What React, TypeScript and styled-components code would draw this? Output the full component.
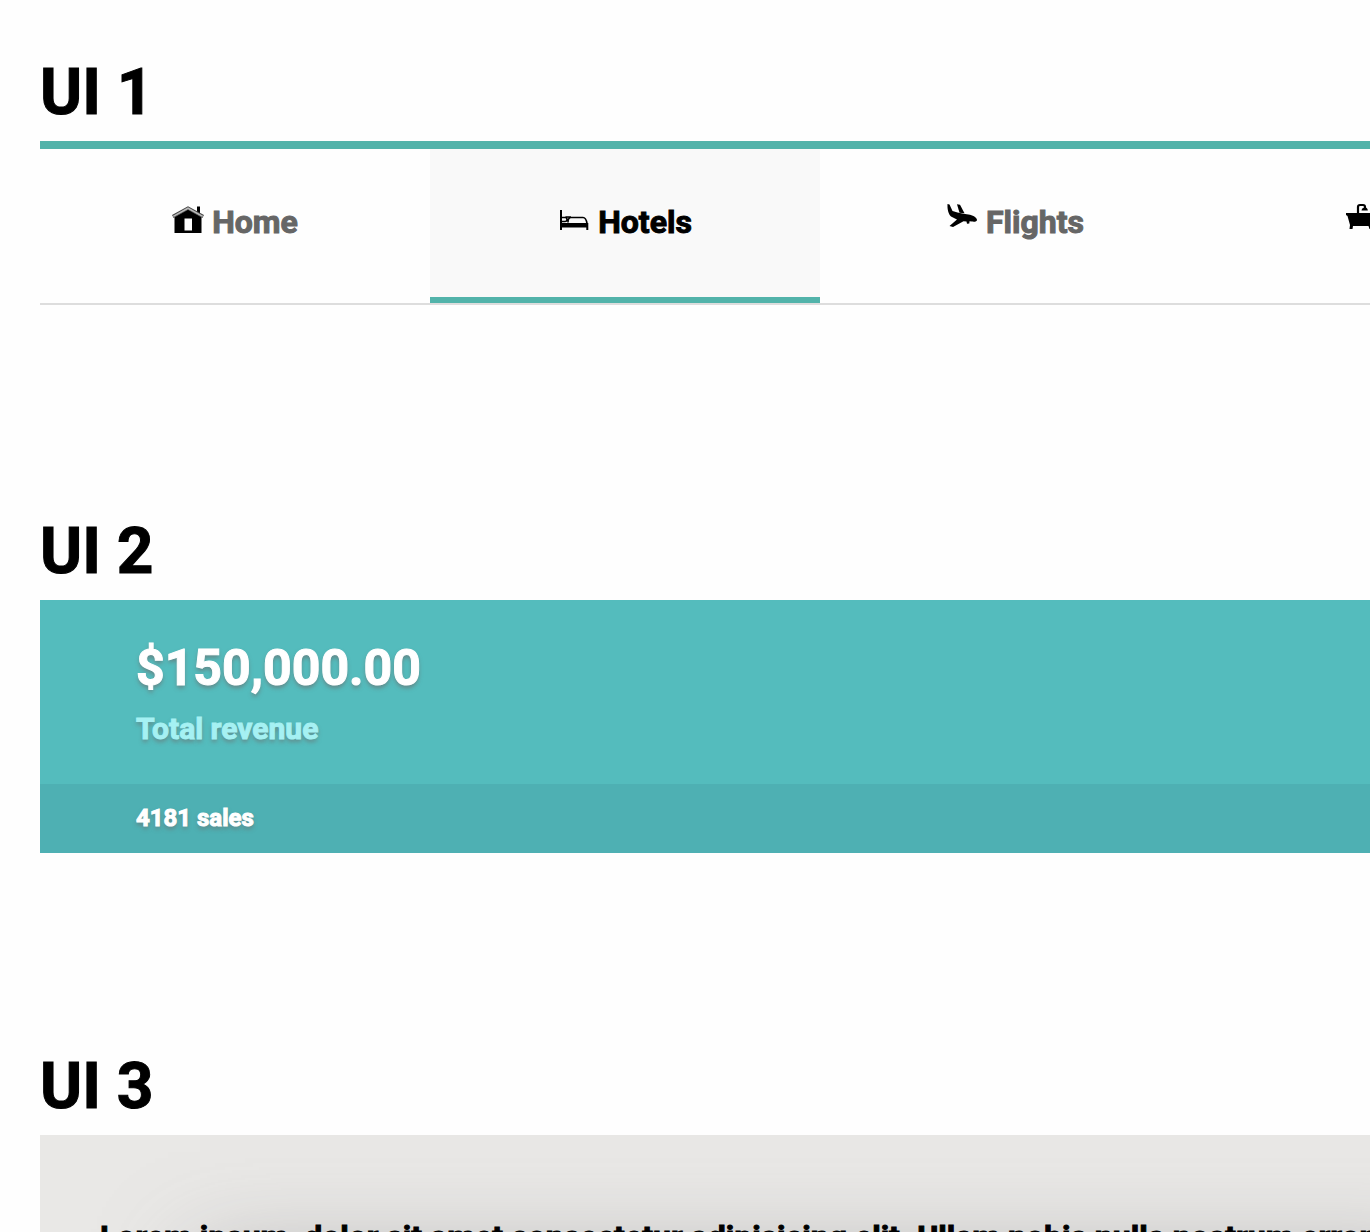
import React from "react";
import styled, { createGlobalStyle } from "styled-components";

const Global = createGlobalStyle`
  * { box-sizing: border-box; }
  body {
    margin: 0;
    background: #fefefe;
    color: #000;
    font-family: Roboto, "Liberation Sans", sans-serif;
    font-weight: 700;
    -webkit-text-stroke: 1px currentColor;
  }
`;

const Page = styled.main`
  display: grid;
  grid-template-columns: auto;
  align-content: start;
  height: 100vh;
  overflow: hidden;
  padding: 45px 0 0 40px;
`;

const Section = styled.section<{ $gap: number }>`
  margin-bottom: ${(p) => p.$gap}px;
`;

const Title = styled.h1`
  margin: 0;
  font-size: 64px;
  line-height: 96px;
`;

const Nav = styled.nav`
  border-top: 8px solid #52b3aa;
  border-bottom: 2px solid #ddd;
`;

const Tabs = styled.ul`
  display: flex;
  margin: 0;
  padding: 0;
  list-style: none;
`;

const Tab = styled.li`
  flex: 1 0 auto;
  min-width: 390px;
`;

const TabLink = styled.a<{ $active?: boolean }>`
  display: flex;
  align-items: center;
  justify-content: center;
  gap: 8px;
  height: 154px;
  padding-bottom: 2px;
  border-bottom: 6px solid ${(p) => (p.$active ? "#52b3aa" : "transparent")};
  background: ${(p) => (p.$active ? "#f9f9f9" : "transparent")};
  color: ${(p) => (p.$active ? "#000" : "#666")};
  font-size: 32px;
  line-height: 48px;
  text-decoration: none;
`;

const Glyph = styled.svg`
  width: 32px;
  height: 40px;
  flex: none;
  color: #000;
`;

const Revenue = styled.div`
  background: #54bcbd;
  color: #fff;
  text-shadow: 0 3px 4px rgba(110, 100, 100, 0.6);
`;

const Summary = styled.div`
  padding: 31px 96px 33px;
`;

const Amount = styled.div`
  font-size: 50px;
  line-height: 75px;
`;

const Caption = styled.div`
  color: #a5f1f3;
  font-size: 30px;
  line-height: 45px;
`;

const Sales = styled.div`
  padding: 16px 96px;
  background: #4eb0b3;
  font-size: 24px;
  line-height: 37px;
`;

const Panel = styled.div`
  padding: 78px 60px 60px;
  background: #e9e8e6;
  overflow: hidden;
`;

const Copy = styled.p`
  margin: 0;
  font-size: 32px;
  line-height: 48px;
`;

const Card = styled.div`
  height: 300px;
  margin: 0 100px;
  background: #c8c7c7;
  box-shadow: 0 0 90px rgba(120, 118, 122, 0.5);
`;

const HomeIcon = () => (
  <Glyph viewBox="0 2 32 40" aria-hidden="true">
    <path d="M2.500 17L16 9.500l13.500 7.500v16H2.500z" fill="currentColor" />
    <path d="M12.500 18.500h7.500v12h-7.500z" fill="#fff" />
    <path d="M25 6.500h3v9l-3-2z" fill="currentColor" />
    <path d="M.8 16.500L16 8l15.200 8.500" fill="none" stroke="#444" strokeWidth="3.2" />
    <path d="M1.300 16.400L16 8.200l14.700 8.200" fill="none" stroke="#bbb" strokeWidth="1.6" />
  </Glyph>
);

const BedIcon = () => (
  <Glyph viewBox="0 2 32 40" aria-hidden="true">
    <path d="M3 10v20M29.300 23v7" fill="none" stroke="currentColor" strokeWidth="2" />
    <path d="M3 23h27v4.500H3z" fill="currentColor" />
    <path d="M4 17.500h3q2 0 2 2t-2 2H4M10 22.500q0-5 3-5h12q3 0 4 6M7.500 17H13" fill="none" stroke="currentColor" strokeWidth="1.6" />
  </Glyph>
);

const PlaneIcon = () => (
  <Glyph viewBox="0 2 32 40" aria-hidden="true">
    <path
      d="M1.500 4l2 .5 3 6.500 5 1.500 6 1.300 6.500 1c4 1 7 3.200 7 5.200 0 1.600-2.500 2-5 1.600l-2.500-.4-.2 2.400-2.300.2-.5-2.300-3-.3L7 27l-3.500-1 7.500-6.500-6-3C2.300 14 1.200 9 1.500 4z"
      fill="currentColor"
    />
    <path d="M11 4.300l3 .4 4.500 8.500-5-.5z" fill="currentColor" />
  </Glyph>
);

const BathIcon = () => (
  <Glyph viewBox="0 2 32 40" aria-hidden="true">
    <path d="M2 13h29v2l-1.500 1-2.200 9 1.200 4h-3l-1-3H9l-.5 3h-3l.5-4-2.500-9L2 15z" fill="currentColor" />
    <path d="M14 14V7q0-2 2-2h3q2 0 2 2v2" fill="none" stroke="currentColor" strokeWidth="2.2" />
    <path d="M17.500 10.500q.5-3 3.300-3t3 3z" fill="currentColor" />
  </Glyph>
);

const tabs = [
  { label: "Home", Icon: HomeIcon },
  { label: "Hotels", Icon: BedIcon, active: true },
  { label: "Flights", Icon: PlaneIcon },
  { label: "Baths", Icon: BathIcon },
];

export default function App() {
  return (
    <Page>
      <Global />
      <Section $gap={199}>
        <Title>UI 1</Title>
        <Nav>
          <Tabs>
            {tabs.map(({ label, Icon, active }) => (
              <Tab key={label}>
                <TabLink href="#" $active={active} aria-current={active ? "page" : undefined}>
                  <Icon />
                  {label}
                </TabLink>
              </Tab>
            ))}
          </Tabs>
        </Nav>
      </Section>
      <Section $gap={186}>
        <Title>UI 2</Title>
        <Revenue>
          <Summary>
            <Amount>$150,000.00</Amount>
            <Caption>Total revenue</Caption>
          </Summary>
          <Sales>4181 sales</Sales>
        </Revenue>
      </Section>
      <Section $gap={0}>
        <Title>UI 3</Title>
        <Panel>
          <Copy>Lorem ipsum, dolor sit amet consectetur adipisicing elit. Ullam nobis nulla nostrum error.</Copy>
          <Card />
        </Panel>
      </Section>
    </Page>
  );
}
